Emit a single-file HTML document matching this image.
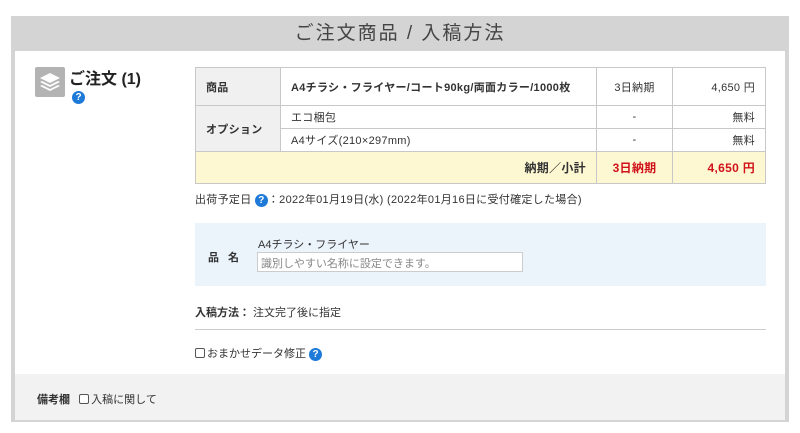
<!DOCTYPE html>
<html><head><meta charset="utf-8"><style>
*{box-sizing:border-box;margin:0;padding:0}
body{width:800px;height:433px;background:#fff;font-family:"Liberation Sans","Noto Sans CJK JP",sans-serif;color:#333;position:relative;overflow:hidden}
.box{position:absolute;left:11px;top:16px;width:778px;height:406px;border:4px solid #d4d4d4;border-top:0;background:#fff}
.hd{position:absolute;left:11px;top:16px;width:778px;height:35px;background:#d4d4d4;text-align:center;font-size:19px;line-height:35px;letter-spacing:2px;color:#444}
.abs{position:absolute;white-space:nowrap}
table{position:absolute;left:195px;top:67px;width:571px;border-collapse:collapse;font-size:11px;letter-spacing:.3px}
td{border:1px solid #c8c8c8;padding:0 10px}
.lab{background:#f0f0f0;font-weight:bold;width:85px}
.q{display:inline-block;width:13px;height:13px;border-radius:50%;background:#1e7ad8;color:#fff;font-size:10px;font-weight:bold;text-align:center;line-height:13px;vertical-align:middle;letter-spacing:0}
.cb{display:inline-block;width:10px;height:10px;border:1px solid #555;border-radius:2px;vertical-align:-1px;margin-right:2px;background:#fff}
</style></head><body>
<div class="box"></div>
<div class="hd">ご注文商品 / 入稿方法</div>
<div class="abs" style="left:35px;top:67px;width:30px;height:30px;background:#b3b3b3;border-radius:2px">
<svg width="30" height="30" viewBox="0 0 30 30"><g fill="#fff"><path d="M5 19l10 5 10-5-2-1-8 4-8-4z"/><path d="M5 15l10 5 10-5-2-1-8 4-8-4z"/><path d="M5 11l10-5 10 5-10 5z"/></g></svg></div>
<div class="abs" style="left:69px;top:65px;font-size:16px;font-weight:bold;color:#222">ご注文 (1)</div>
<div class="abs" style="left:72px;top:89px"><span class="q">?</span></div>
<table>
<tr style="height:38px"><td class="lab">商品</td><td style="font-weight:bold;width:316px">A4チラシ・フライヤー/コート90kg/両面カラー/1000枚</td><td style="text-align:center;width:76px">3日納期</td><td style="text-align:right">4,650 円</td></tr>
<tr style="height:23px"><td class="lab" rowspan="2">オプション</td><td>エコ梱包</td><td style="text-align:center">-</td><td style="text-align:right">無料</td></tr>
<tr style="height:23px"><td>A4サイズ(210×297mm)</td><td style="text-align:center">-</td><td style="text-align:right">無料</td></tr>
<tr style="height:32px;background:#fdf8d2;font-weight:bold;font-size:12px"><td colspan="2" style="text-align:right">納期／小計</td><td style="text-align:center;color:#d0121b">3日納期</td><td style="text-align:right;color:#d0121b">4,650 円</td></tr>
</table>
<div class="abs" style="left:195px;top:191px;font-size:11px;letter-spacing:.3px">出荷予定日 <span class="q">?</span>：2022年01月19日(水) (2022年01月16日に受付確定した場合)</div>
<div class="abs" style="left:195px;top:223px;width:571px;height:63px;background:#ebf3fb"></div>
<div class="abs" style="left:208px;top:249px;font-size:11px;font-weight:bold;letter-spacing:3px">品 名</div>
<div class="abs" style="left:258px;top:236px;font-size:11px">A4チラシ・フライヤー</div>
<div class="abs" style="left:257px;top:252px;width:266px;height:20px;background:#fff;border:1px solid #ccc;font-size:11px;color:#888;padding:2px 3px">識別しやすい名称に設定できます。</div>
<div class="abs" style="left:195px;top:304px;font-size:11px"><b>入稿方法：</b> 注文完了後に指定</div>
<div class="abs" style="left:195px;top:329px;width:571px;height:1px;background:#ccc"></div>
<div class="abs" style="left:195px;top:345px;font-size:11px"><span class="cb"></span>おまかせデータ修正 <span class="q">?</span></div>
<div class="abs" style="left:15px;top:374px;width:770px;height:46px;background:#f2f2f2"></div>
<div class="abs" style="left:37px;top:391px;font-size:11px"><b>備考欄</b>&nbsp;&nbsp;&nbsp;<span class="cb"></span>入稿に関して</div>
</body></html>
